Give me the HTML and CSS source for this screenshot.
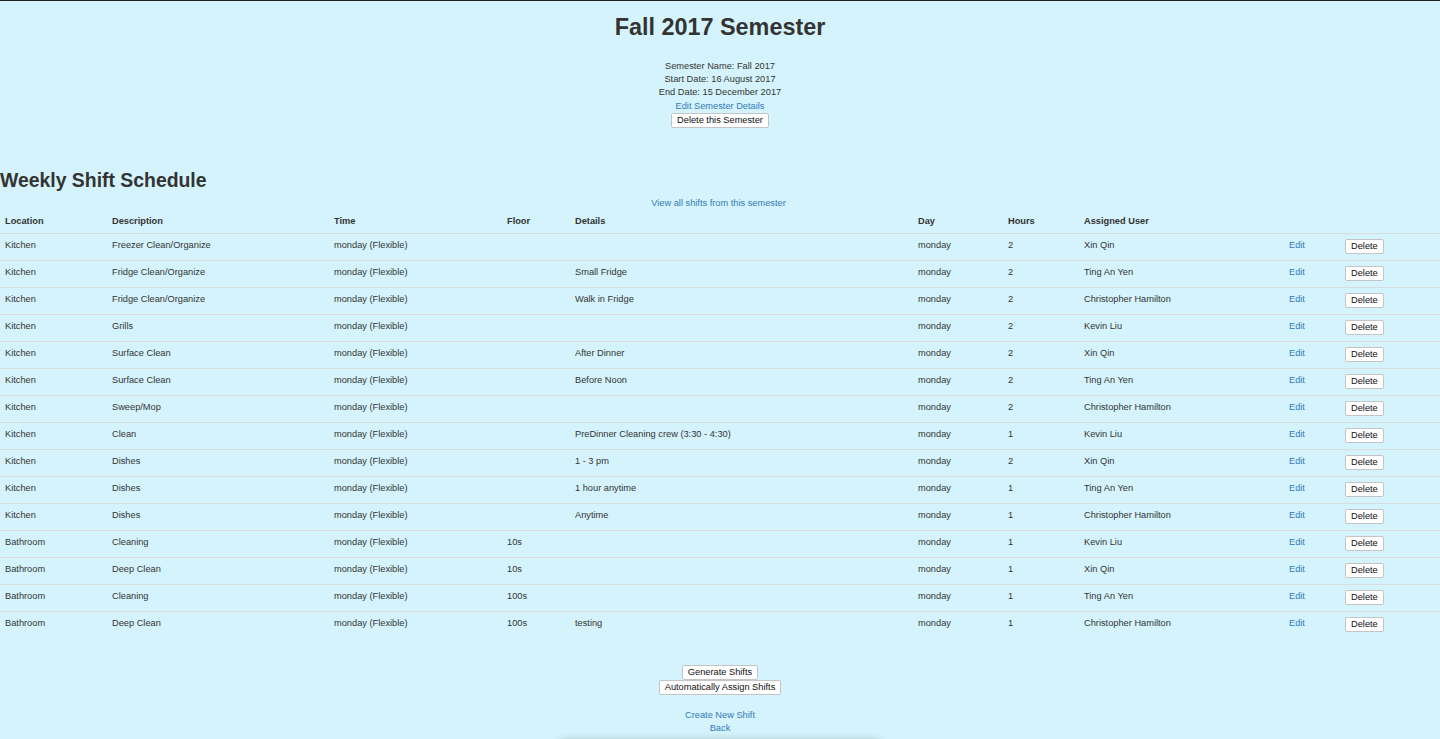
FILE: index.html
```html
<!DOCTYPE html>
<html lang="en">
<head>
<meta charset="utf-8">
<title>Fall 2017 Semester</title>
<link rel="stylesheet" href="styles.css">
</head>
<body>
<div class="page">
  <h1 class="title">Fall 2017 Semester</h1>
  <div class="details">
    <div>Semester Name: Fall 2017</div>
    <div>Start Date: 16 August 2017</div>
    <div>End Date: 15 December 2017</div>
    <div><a href="#" class="link">Edit Semester Details</a></div>
    <div><button class="btn">Delete this Semester</button></div>
  </div>

  <h2 class="section-title">Weekly Shift Schedule</h2>
  <div class="view-all"><a href="#" class="link">View all shifts from this semester</a></div>

  <table class="shifts">
    <colgroup>
      <col class="c-loc"><col class="c-desc"><col class="c-time"><col class="c-floor"><col class="c-details"><col class="c-day"><col class="c-hours"><col class="c-user"><col class="c-edit"><col class="c-del">
    </colgroup>
    <thead>
      <tr><th>Location</th><th>Description</th><th>Time</th><th>Floor</th><th>Details</th><th>Day</th><th>Hours</th><th>Assigned User</th><th></th><th></th></tr>
    </thead>
    <tbody>
      <tr><td>Kitchen</td><td>Freezer Clean/Organize</td><td>monday (Flexible)</td><td></td><td></td><td>monday</td><td>2</td><td>Xin Qin</td><td><a href="#" class="link">Edit</a></td><td><button class="btn">Delete</button></td></tr>
      <tr><td>Kitchen</td><td>Fridge Clean/Organize</td><td>monday (Flexible)</td><td></td><td>Small Fridge</td><td>monday</td><td>2</td><td>Ting An Yen</td><td><a href="#" class="link">Edit</a></td><td><button class="btn">Delete</button></td></tr>
      <tr><td>Kitchen</td><td>Fridge Clean/Organize</td><td>monday (Flexible)</td><td></td><td>Walk in Fridge</td><td>monday</td><td>2</td><td>Christopher Hamilton</td><td><a href="#" class="link">Edit</a></td><td><button class="btn">Delete</button></td></tr>
      <tr><td>Kitchen</td><td>Grills</td><td>monday (Flexible)</td><td></td><td></td><td>monday</td><td>2</td><td>Kevin Liu</td><td><a href="#" class="link">Edit</a></td><td><button class="btn">Delete</button></td></tr>
      <tr><td>Kitchen</td><td>Surface Clean</td><td>monday (Flexible)</td><td></td><td>After Dinner</td><td>monday</td><td>2</td><td>Xin Qin</td><td><a href="#" class="link">Edit</a></td><td><button class="btn">Delete</button></td></tr>
      <tr><td>Kitchen</td><td>Surface Clean</td><td>monday (Flexible)</td><td></td><td>Before Noon</td><td>monday</td><td>2</td><td>Ting An Yen</td><td><a href="#" class="link">Edit</a></td><td><button class="btn">Delete</button></td></tr>
      <tr><td>Kitchen</td><td>Sweep/Mop</td><td>monday (Flexible)</td><td></td><td></td><td>monday</td><td>2</td><td>Christopher Hamilton</td><td><a href="#" class="link">Edit</a></td><td><button class="btn">Delete</button></td></tr>
      <tr><td>Kitchen</td><td>Clean</td><td>monday (Flexible)</td><td></td><td>PreDinner Cleaning crew (3:30 - 4:30)</td><td>monday</td><td>1</td><td>Kevin Liu</td><td><a href="#" class="link">Edit</a></td><td><button class="btn">Delete</button></td></tr>
      <tr><td>Kitchen</td><td>Dishes</td><td>monday (Flexible)</td><td></td><td>1 - 3 pm</td><td>monday</td><td>2</td><td>Xin Qin</td><td><a href="#" class="link">Edit</a></td><td><button class="btn">Delete</button></td></tr>
      <tr><td>Kitchen</td><td>Dishes</td><td>monday (Flexible)</td><td></td><td>1 hour anytime</td><td>monday</td><td>1</td><td>Ting An Yen</td><td><a href="#" class="link">Edit</a></td><td><button class="btn">Delete</button></td></tr>
      <tr><td>Kitchen</td><td>Dishes</td><td>monday (Flexible)</td><td></td><td>Anytime</td><td>monday</td><td>1</td><td>Christopher Hamilton</td><td><a href="#" class="link">Edit</a></td><td><button class="btn">Delete</button></td></tr>
      <tr><td>Bathroom</td><td>Cleaning</td><td>monday (Flexible)</td><td>10s</td><td></td><td>monday</td><td>1</td><td>Kevin Liu</td><td><a href="#" class="link">Edit</a></td><td><button class="btn">Delete</button></td></tr>
      <tr><td>Bathroom</td><td>Deep Clean</td><td>monday (Flexible)</td><td>10s</td><td></td><td>monday</td><td>1</td><td>Xin Qin</td><td><a href="#" class="link">Edit</a></td><td><button class="btn">Delete</button></td></tr>
      <tr><td>Bathroom</td><td>Cleaning</td><td>monday (Flexible)</td><td>100s</td><td></td><td>monday</td><td>1</td><td>Ting An Yen</td><td><a href="#" class="link">Edit</a></td><td><button class="btn">Delete</button></td></tr>
      <tr><td>Bathroom</td><td>Deep Clean</td><td>monday (Flexible)</td><td>100s</td><td>testing</td><td>monday</td><td>1</td><td>Christopher Hamilton</td><td><a href="#" class="link">Edit</a></td><td><button class="btn">Delete</button></td></tr>
    </tbody>
  </table>

  <div class="actions">
    <button class="btn">Generate Shifts</button>
    <button class="btn">Automatically Assign Shifts</button>
  </div>
  <div class="footer-links">
    <a href="#" class="link">Create New Shift</a>
    <a href="#" class="link">Back</a>
  </div>
  <div class="shadow-edge"></div>
</div>
</body>
</html>
```

FILE: styles.css
```css
html, body {
  margin: 0;
  padding: 0;
  background: #d5f3fc;
}

body {
  border-top: 1px solid #1e1e1e;
  font-family: "Liberation Sans", Arial, Helvetica, sans-serif;
  font-size: 9.25px;
  line-height: 13.33px;
  color: #333333;
  overflow: hidden;
}

.page {
  display: flex;
  flex-direction: column;
}

.title {
  margin: 13px 0 19.3px;
  font-size: 23.4px;
  line-height: 26.4px;
  font-weight: 700;
  text-align: center;
  color: #333333;
}

.details {
  display: flex;
  flex-direction: column;
  align-items: center;
  text-align: center;
}

.link {
  color: #337ab7;
  text-decoration: none;
}

.btn {
  font-family: "Liberation Sans", Arial, Helvetica, sans-serif;
  font-size: 9.25px;
  line-height: 11px;
  padding: 1px 5px;
  margin: 0;
  color: #111111;
  background: #ffffff;
  border: 1px solid #c4c4c4;
  border-radius: 2px;
  display: block;
}

.section-title {
  margin: 41.4px 0 6px;
  font-size: 19.4px;
  line-height: 22px;
  font-weight: 700;
  color: #333333;
}

.view-all {
  text-align: center;
  padding-right: 3px;
}

.shifts {
  width: 100%;
  table-layout: fixed;
  border-collapse: collapse;
  border-spacing: 0;
}

.c-loc { width: 107px; }
.c-desc { width: 222px; }
.c-time { width: 173px; }
.c-floor { width: 68px; }
.c-details { width: 343px; }
.c-day { width: 90px; }
.c-hours { width: 76px; }
.c-user { width: 205px; }
.c-edit { width: 56px; }
.c-del { width: 100px; }

.shifts th {
  text-align: left;
  font-weight: 700;
  padding: 4.5px 5px 4px;
  border-bottom: 1px solid #d9dcdd;
  vertical-align: bottom;
  white-space: nowrap;
}

.shifts td {
  padding: 5.5px 5px;
  border-top: 1px solid #d9dcdd;
  vertical-align: top;
  white-space: nowrap;
  height: 15px;
  box-sizing: content-box;
}

.actions {
  margin-top: 27.3px;
  display: flex;
  flex-direction: column;
  align-items: center;
  gap: 0.6px;
}

.footer-links {
  margin-top: 13.7px;
  display: flex;
  flex-direction: column;
  align-items: center;
}

.shadow-edge {
  align-self: center;
  width: 320px;
  height: 30px;
  margin-top: 6px;
  border-radius: 6px;
  box-shadow: 0 -1px 10px rgba(0, 0, 0, 0.28);
}
```
